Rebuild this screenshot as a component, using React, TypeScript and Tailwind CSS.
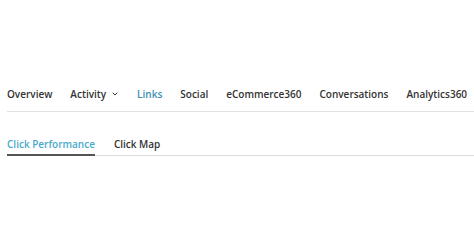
import {ChevronDown} from 'lucide-react';

const NAV = ['Overview', 'Activity', 'Links', 'Social', 'eCommerce360', 'Conversations', 'Analytics360'];

export default function App() {
    return (
        <div className="w-[474px] h-[249px] bg-white pl-[7px] pt-[86px] overflow-hidden" style={{fontFamily: '"Open Sans", sans-serif'}}>
            <nav className="flex items-center gap-[18px] pb-[9px] leading-[16px] border-b border-[#e2e2e2] text-[10px] font-semibold text-[#333]">
                {NAV.map(item => (
                    <span key={item} className={'flex items-center gap-[5px] ' + (item === 'Links' ? 'text-[#3a8fb0]' : '')}>
                        {item}
                        {item === 'Activity' && <ChevronDown size={8} strokeWidth={3}/>}
                    </span>
                ))}
            </nav>
            <div className="flex mt-[24px] gap-[19px] leading-[16px] border-b border-[#dcdcdc] text-[10px] font-semibold text-[#333]">
                <span className="text-[#49a9cc] pb-[2px] border-b-2 border-[#555] -mb-px">Click Performance</span>
                <span className="pb-[2px]">Click Map</span>
            </div>
        </div>
    );
}
